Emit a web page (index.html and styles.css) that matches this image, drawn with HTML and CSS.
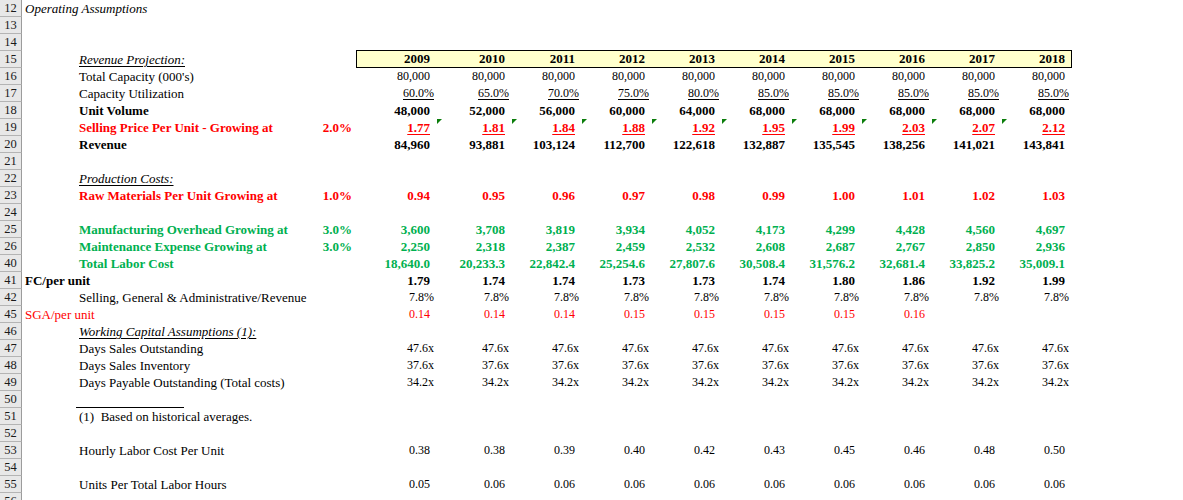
FILE: index.html
```html
<!DOCTYPE html>
<html>
<head>
<meta charset="utf-8">
<title>Operating Assumptions</title>
<link rel="stylesheet" href="styles.css">
</head>
<body>
<div class="sheet">
  <div class="row"><div class="rh">12</div><div class="c ital wide">Operating Assumptions</div></div>
  <div class="row"><div class="rh">13</div></div>
  <div class="row"><div class="rh">14</div></div>
  <div class="row">
    <div class="rh">15</div><div></div><div class="c ital ul">Revenue Projection:</div><div></div>
    <div class="n b yr first">2009</div><div class="n b yr">2010</div><div class="n b yr">2011</div><div class="n b yr">2012</div><div class="n b yr">2013</div><div class="n b yr">2014</div><div class="n b yr">2015</div><div class="n b yr">2016</div><div class="n b yr">2017</div><div class="n b yr last">2018</div>
  </div>
  <div class="row">
    <div class="rh">16</div><div></div><div class="c">Total Capacity (000's)</div><div></div>
    <div class="n">80,000</div><div class="n">80,000</div><div class="n">80,000</div><div class="n">80,000</div><div class="n">80,000</div><div class="n">80,000</div><div class="n">80,000</div><div class="n">80,000</div><div class="n">80,000</div><div class="n">80,000</div>
  </div>
  <div class="row">
    <div class="rh">17</div><div></div><div class="c">Capacity Utilization</div><div></div>
    <div class="n p"><span class="ul">60.0%</span></div><div class="n p"><span class="ul">65.0%</span></div><div class="n p"><span class="ul">70.0%</span></div><div class="n p"><span class="ul">75.0%</span></div><div class="n p"><span class="ul">80.0%</span></div><div class="n p"><span class="ul">85.0%</span></div><div class="n p"><span class="ul">85.0%</span></div><div class="n p"><span class="ul">85.0%</span></div><div class="n p"><span class="ul">85.0%</span></div><div class="n p"><span class="ul">85.0%</span></div>
  </div>
  <div class="row">
    <div class="rh">18</div><div></div><div class="c b">Unit Volume</div><div></div>
    <div class="n b">48,000</div><div class="n b">52,000</div><div class="n b">56,000</div><div class="n b">60,000</div><div class="n b">64,000</div><div class="n b">68,000</div><div class="n b">68,000</div><div class="n b">68,000</div><div class="n b">68,000</div><div class="n b">68,000</div>
  </div>
  <div class="row red">
    <div class="rh">19</div><div></div><div class="c b">Selling Price Per Unit - Growing at</div><div class="n b rate">2.0%</div>
    <div class="n b"><span class="ul">1.77</span></div><div class="n b tri"><span class="ul">1.81</span></div><div class="n b tri"><span class="ul">1.84</span></div><div class="n b tri"><span class="ul">1.88</span></div><div class="n b tri"><span class="ul">1.92</span></div><div class="n b tri"><span class="ul">1.95</span></div><div class="n b tri"><span class="ul">1.99</span></div><div class="n b tri"><span class="ul">2.03</span></div><div class="n b tri"><span class="ul">2.07</span></div><div class="n b tri"><span class="ul">2.12</span></div>
  </div>
  <div class="row">
    <div class="rh">20</div><div></div><div class="c b">Revenue</div><div></div>
    <div class="n b">84,960</div><div class="n b">93,881</div><div class="n b">103,124</div><div class="n b">112,700</div><div class="n b">122,618</div><div class="n b">132,887</div><div class="n b">135,545</div><div class="n b">138,256</div><div class="n b">141,021</div><div class="n b">143,841</div>
  </div>
  <div class="row"><div class="rh">21</div></div>
  <div class="row"><div class="rh">22</div><div></div><div class="c ital ul">Production Costs:</div></div>
  <div class="row red">
    <div class="rh">23</div><div></div><div class="c b">Raw Materials Per Unit Growing at</div><div class="n b rate">1.0%</div>
    <div class="n b">0.94</div><div class="n b">0.95</div><div class="n b">0.96</div><div class="n b">0.97</div><div class="n b">0.98</div><div class="n b">0.99</div><div class="n b">1.00</div><div class="n b">1.01</div><div class="n b">1.02</div><div class="n b">1.03</div>
  </div>
  <div class="row"><div class="rh">24</div></div>
  <div class="row grn">
    <div class="rh">25</div><div></div><div class="c b">Manufacturing Overhead Growing at</div><div class="n b rate">3.0%</div>
    <div class="n b">3,600</div><div class="n b">3,708</div><div class="n b">3,819</div><div class="n b">3,934</div><div class="n b">4,052</div><div class="n b">4,173</div><div class="n b">4,299</div><div class="n b">4,428</div><div class="n b">4,560</div><div class="n b">4,697</div>
  </div>
  <div class="row grn">
    <div class="rh">26</div><div></div><div class="c b">Maintenance Expense Growing at</div><div class="n b rate">3.0%</div>
    <div class="n b">2,250</div><div class="n b">2,318</div><div class="n b">2,387</div><div class="n b">2,459</div><div class="n b">2,532</div><div class="n b">2,608</div><div class="n b">2,687</div><div class="n b">2,767</div><div class="n b">2,850</div><div class="n b">2,936</div>
  </div>
  <div class="row grn">
    <div class="rh">40</div><div></div><div class="c b">Total Labor Cost</div><div></div>
    <div class="n b">18,640.0</div><div class="n b">20,233.3</div><div class="n b">22,842.4</div><div class="n b">25,254.6</div><div class="n b">27,807.6</div><div class="n b">30,508.4</div><div class="n b">31,576.2</div><div class="n b">32,681.4</div><div class="n b">33,825.2</div><div class="n b">35,009.1</div>
  </div>
  <div class="row">
    <div class="rh">41</div><div class="c b wide">FC/per unit</div><div></div><div></div>
    <div class="n b">1.79</div><div class="n b">1.74</div><div class="n b">1.74</div><div class="n b">1.73</div><div class="n b">1.73</div><div class="n b">1.74</div><div class="n b">1.80</div><div class="n b">1.86</div><div class="n b">1.92</div><div class="n b">1.99</div>
  </div>
  <div class="row">
    <div class="rh">42</div><div></div><div class="c">Selling, General &amp; Administrative/Revenue</div><div></div>
    <div class="n p">7.8%</div><div class="n p">7.8%</div><div class="n p">7.8%</div><div class="n p">7.8%</div><div class="n p">7.8%</div><div class="n p">7.8%</div><div class="n p">7.8%</div><div class="n p">7.8%</div><div class="n p">7.8%</div><div class="n p">7.8%</div>
  </div>
  <div class="row red">
    <div class="rh">45</div><div class="c wide">SGA/per unit</div><div></div><div></div>
    <div class="n">0.14</div><div class="n">0.14</div><div class="n">0.14</div><div class="n">0.15</div><div class="n">0.15</div><div class="n">0.15</div><div class="n">0.15</div><div class="n">0.16</div>
  </div>
  <div class="row"><div class="rh">46</div><div></div><div class="c ital ul">Working Capital Assumptions (1):</div></div>
  <div class="row">
    <div class="rh">47</div><div></div><div class="c">Days Sales Outstanding</div><div></div>
    <div class="n p">47.6x</div><div class="n p">47.6x</div><div class="n p">47.6x</div><div class="n p">47.6x</div><div class="n p">47.6x</div><div class="n p">47.6x</div><div class="n p">47.6x</div><div class="n p">47.6x</div><div class="n p">47.6x</div><div class="n p">47.6x</div>
  </div>
  <div class="row">
    <div class="rh">48</div><div></div><div class="c">Days Sales Inventory</div><div></div>
    <div class="n p">37.6x</div><div class="n p">37.6x</div><div class="n p">37.6x</div><div class="n p">37.6x</div><div class="n p">37.6x</div><div class="n p">37.6x</div><div class="n p">37.6x</div><div class="n p">37.6x</div><div class="n p">37.6x</div><div class="n p">37.6x</div>
  </div>
  <div class="row">
    <div class="rh">49</div><div></div><div class="c">Days Payable Outstanding (Total costs)</div><div></div>
    <div class="n p">34.2x</div><div class="n p">34.2x</div><div class="n p">34.2x</div><div class="n p">34.2x</div><div class="n p">34.2x</div><div class="n p">34.2x</div><div class="n p">34.2x</div><div class="n p">34.2x</div><div class="n p">34.2x</div><div class="n p">34.2x</div>
  </div>
  <div class="row"><div class="rh">50</div><div></div><div class="fn-rule"></div></div>
  <div class="row"><div class="rh">51</div><div></div><div class="c pre">(1)  Based on historical averages.</div></div>
  <div class="row"><div class="rh">52</div></div>
  <div class="row">
    <div class="rh">53</div><div></div><div class="c">Hourly Labor Cost Per Unit</div><div></div>
    <div class="n">0.38</div><div class="n">0.38</div><div class="n">0.39</div><div class="n">0.40</div><div class="n">0.42</div><div class="n">0.43</div><div class="n">0.45</div><div class="n">0.46</div><div class="n">0.48</div><div class="n">0.50</div>
  </div>
  <div class="row"><div class="rh">54</div></div>
  <div class="row">
    <div class="rh">55</div><div></div><div class="c">Units Per Total Labor Hours</div><div></div>
    <div class="n">0.05</div><div class="n">0.06</div><div class="n">0.06</div><div class="n">0.06</div><div class="n">0.06</div><div class="n">0.06</div><div class="n">0.06</div><div class="n">0.06</div><div class="n">0.06</div><div class="n">0.06</div>
  </div>
  <div class="row"><div class="rh">56</div></div>
</div>
</body>
</html>
```
FILE: styles.css
```css
html, body {
  margin: 0;
  padding: 0;
  background: #ffffff;
}
body {
  width: 1183px;
  height: 500px;
  overflow: hidden;
  font-family: "Liberation Serif", "Times New Roman", serif;
  font-size: 13px;
  color: #000000;
}
.sheet {
  display: flex;
  flex-direction: column;
}
.row {
  display: grid;
  grid-template-columns: 22px 54px 224px 56px 81px 75px repeat(8, 70px) 1fr;
  grid-template-rows: 17px;
  height: 17px;
  line-height: 17px;
}
.rh {
  box-sizing: border-box;
  height: 17px;
  background: #e8e8e8;
  border-right: 1px solid #9c9c9c;
  border-bottom: 1px solid #b4b4b4;
  font-size: 12.5px;
  line-height: 16px;
  text-align: center;
  color: #1a1a1a;
}
.c {
  padding-left: 3px;
  white-space: nowrap;
}
.wide {
  overflow: visible;
}
.pre {
  white-space: pre;
}
.ital {
  font-style: italic;
}
.ul {
  text-decoration: underline;
  text-decoration-thickness: 1px;
  text-underline-offset: 2px;
}
.b {
  font-weight: bold;
  font-size: 13px;
}
.n {
  text-align: right;
  padding-right: 7px;
  font-size: 12px;
  white-space: nowrap;
}
.n.b {
  font-size: 13px;
}
.p {
  padding-right: 3px;
}
.rate {
  padding-right: 4px;
}
.red {
  color: #ff0000;
}
.grn {
  color: #00b050;
}
.yr {
  box-sizing: border-box;
  height: 18px;
  margin-top: -1px;
  line-height: 16px;
  background: #ffffcc;
  border-top: 1px solid #000000;
  border-bottom: 1px solid #000000;
}
.yr.first {
  border-left: 1px solid #000000;
}
.yr.last {
  border-right: 1px solid #000000;
  padding-right: 6px;
}
.tri {
  position: relative;
}
.tri::before {
  content: "";
  position: absolute;
  left: 0;
  top: 0;
  width: 0;
  height: 0;
  border-top: 5px solid #0b7d0b;
  border-right: 5px solid transparent;
}
.fn-rule {
  box-sizing: border-box;
  width: 108px;
  height: 17px;
  border-bottom: 1px solid #000000;
}
```
